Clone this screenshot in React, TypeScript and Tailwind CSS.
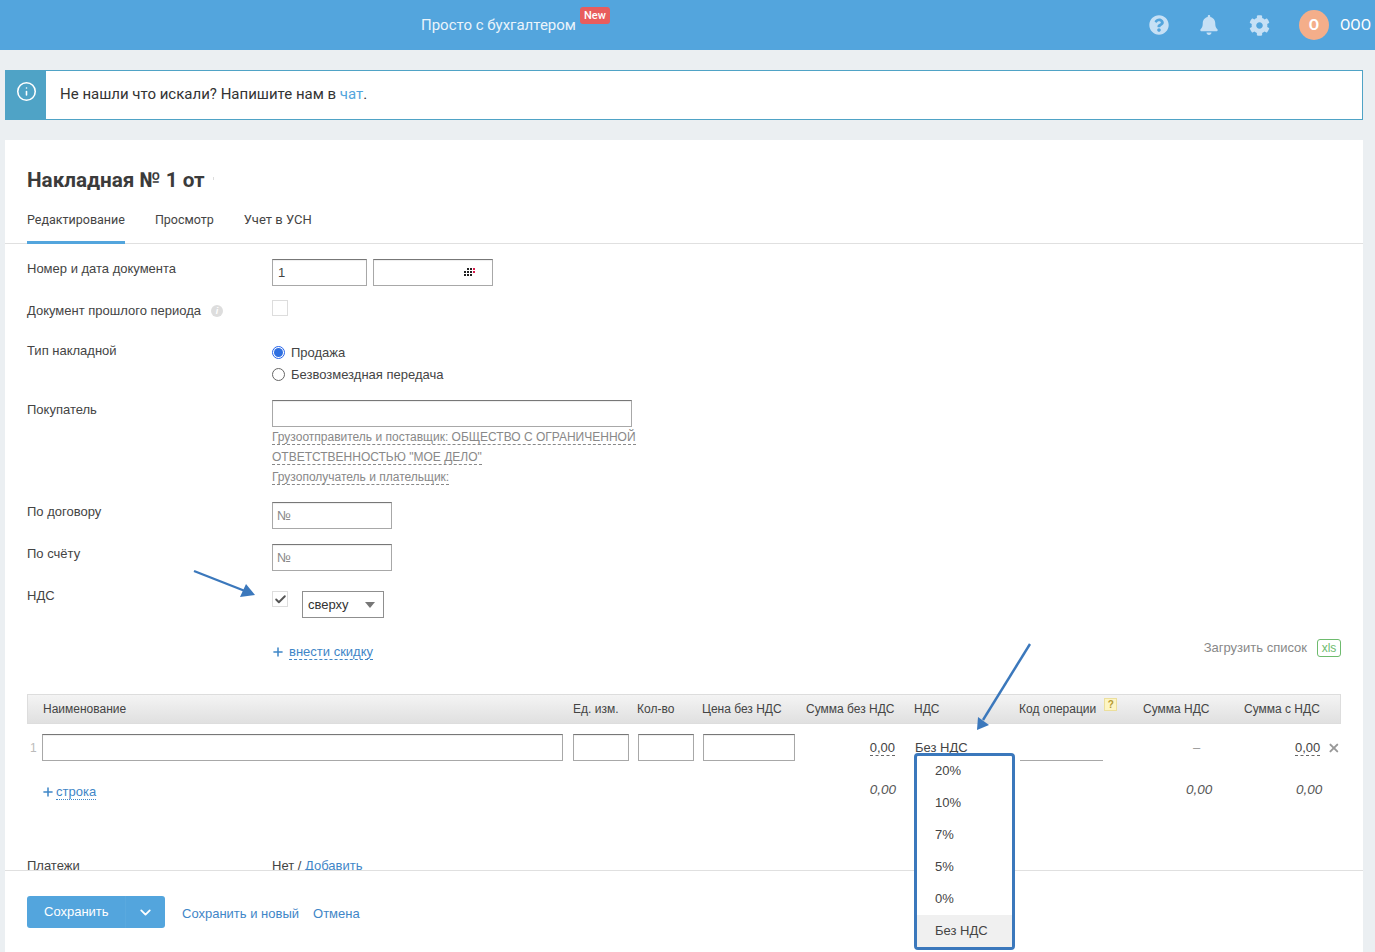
import React from 'react';
import { Check, ChevronDown, Info, Plus, X } from 'lucide-react';
import { FaBell, FaCog, FaQuestionCircle } from 'react-icons/fa';

const inputCls = 'h-[27px] border border-[#a8a8a8] border-t-[#777777] bg-white shadow-[inset_0_1px_1px_#eeeeee]';
const dashed = 'border-b border-dashed border-[#666666]';

const columns = 'grid grid-cols-[546px_64px_65px_104px_108px_105px_124px_101px_97px]';
// the header has a 1px border, so its first column is one pixel shorter
const headerColumns = 'grid grid-cols-[545px_64px_65px_104px_108px_105px_124px_101px_96px]';

const vatOptions = ['20%', '10%', '7%', '5%', '0%'];

const FormRow: React.FC<{ label: React.ReactNode; labelTop?: string; className?: string; children?: React.ReactNode }> = ({
  label,
  labelTop = 'pt-0',
  className = '',
  children,
}) => (
  <div className={`flex items-start ${className}`}>
    <div className={`w-[245px] shrink-0 text-[13px] leading-[18px] text-[#444444] ${labelTop}`}>{label}</div>
    <div className="flex-1">{children}</div>
  </div>
);

// [column, row] of each dot of the small calendar mark
const calendarDots = [
  [1, 0], [2, 0], [3, 0],
  [0, 1], [1, 1], [2, 1], [3, 1],
  [0, 2], [1, 2], [2, 2],
];

const CalendarDots = () => (
  <svg width="11" height="9" viewBox="0 0 11 9" className="block">
    {calendarDots.map(([c, r]) => (
      <rect key={`${c}-${r}`} x={c * 3} y={r * 3} width="2" height="2" fill={c === 3 ? '#d81b4a' : '#222222'} />
    ))}
  </svg>
);

const App: React.FC = () => {
  return (
    <div className="relative flex h-[952px] w-[1375px] flex-col overflow-hidden bg-[#ebeff2] font-['Roboto',sans-serif] text-[#444444]">
      {/* top bar */}
      <header className="flex h-[50px] shrink-0 items-center bg-[#53a5dd] pr-[5px] text-white">
        <div className="ml-[421px] flex items-start">
          <span className="text-[15px] leading-[20px] text-[#eaf4fb]">Просто с бухгалтером</span>
          <span className="ml-[4px] -mt-[8px] rounded-[3px] bg-[#e85d5d] px-[4px] text-[11px] font-medium leading-[17px] text-white">New</span>
        </div>
        <div className="ml-auto flex items-center">
          <FaQuestionCircle className="text-[20px] text-[#c6e0f5]" />
          <FaBell className="ml-[30px] text-[20px] text-[#c6e0f5]" />
          <FaCog className="ml-[30px] text-[21px] text-[#c6e0f5]" />
          <div className="ml-[29px] flex h-[30px] w-[30px] items-center justify-center rounded-full bg-[#f4ae8a] text-[15px] font-bold">О</div>
          <span className="ml-[11px] w-[30px] text-[15px]">ООО</span>
        </div>
      </header>

      {/* info message */}
      <div className="mx-[5px] mr-[12px] mt-[20px] flex h-[50px] shrink-0 border border-[#4fa3c6] bg-white">
        <div className="flex w-[40px] justify-center bg-[#4fa3c6] pt-[10px]">
          <Info size={21} strokeWidth={1.8} className="text-white" />
        </div>
        <div className="ml-[14px] pt-[14px] text-[15px] leading-[18px] text-[#333333]">
          Не нашли что искали? Напишите нам в <span className="text-[#53a5dd]">чат</span>.
        </div>
      </div>

      {/* card */}
      <main className="mx-[5px] mr-[12px] mt-[20px] flex min-h-0 flex-1 flex-col bg-white">
        <h1 className="ml-[22px] mt-[27px] flex items-center text-[20.7px] font-bold leading-[26px] text-[#3b3b3b]">
          Накладная № 1 от
          <span className="ml-[8px] -mt-[3px] h-[3px] w-[1px] bg-[#dddddd]" />
        </h1>
        <nav className="mt-[11px] flex h-[40px] shrink-0 border-b border-[#e0e0e0] pl-[22px] text-[12.5px] text-[#444444]">
          <span className="h-[40px] border-b-[3px] border-[#53a5dd] pt-[7px] leading-[18px]">Редактирование</span>
          <span className="ml-[30px] pt-[7px] leading-[18px]">Просмотр</span>
          <span className="ml-[30px] pt-[7px] text-[13px] leading-[18px]">Учет в УСН</span>
        </nav>

        <section className="h-[626px] shrink-0 overflow-hidden px-[22px] pt-[15px] font-['Liberation_Sans',Arial,sans-serif]">
          <FormRow label="Номер и дата документа" labelTop="pt-[1px]">
            <div className="flex gap-[6px]">
              <div className={`${inputCls} w-[95px] pl-[5px] text-[13px] leading-[25px]`}>1</div>
              <div className={`${inputCls} flex w-[120px] items-center justify-end pr-[17px]`}>
                <CalendarDots />
              </div>
            </div>
          </FormRow>

          <FormRow
            className="mt-[14px]"
            labelTop="pt-[2px]"
            label={
              <span className="flex items-center">
                Документ прошлого периода
                <span className="ml-[10px] flex h-[12px] w-[12px] items-center justify-center rounded-full bg-[#dddddd] text-[9px] font-bold italic text-white">i</span>
              </span>
            }
          >
            <div className="h-[16px] w-[16px] border border-[#dddddd] bg-white" />
          </FormRow>

          <FormRow className="mt-[22px]" label="Тип накладной">
            <div className="flex flex-col text-[13px] leading-[18px] text-[#444444]">
              <div className="mt-[2px] flex items-center">
                <span className="mb-[2px] flex h-[13px] w-[13px] items-center justify-center rounded-full border border-[#2563eb]">
                  <span className="h-[9px] w-[9px] rounded-full bg-[#2f6fe0]" />
                </span>
                <span className="ml-[6px]">Продажа</span>
              </div>
              <div className="mt-[4px] flex items-center">
                <span className="mb-[2px] h-[13px] w-[13px] rounded-full border border-[#666666]" />
                <span className="ml-[6px]">Безвозмездная передача</span>
              </div>
            </div>
          </FormRow>

          <FormRow className="mt-[16px]" labelTop="pt-[1px]" label="Покупатель">
            <div className={`${inputCls} w-[360px]`} />
            <div className="whitespace-nowrap text-[12px] leading-[20px] text-[#888888]">
              <div className="h-[20px]">
                <span className="border-b border-dashed border-[#888888]">Грузоотправитель и поставщик: ОБЩЕСТВО С ОГРАНИЧЕННОЙ</span>
              </div>
              <div className="h-[20px]">
                <span className="border-b border-dashed border-[#888888]">ОТВЕТСТВЕННОСТЬЮ "МОЕ ДЕЛО"</span>
              </div>
              <div className="h-[20px]">
                <span className="border-b border-dashed border-[#888888]">Грузополучатель и плательщик:</span>
              </div>
            </div>
          </FormRow>

          <FormRow className="mt-[15px]" labelTop="pt-[1px]" label="По договору">
            <div className={`${inputCls} w-[120px] pl-[4px] text-[13px] leading-[25px] text-[#888888]`}>№</div>
          </FormRow>

          <FormRow className="mt-[15px]" labelTop="pt-[1px]" label="По счёту">
            <div className={`${inputCls} w-[120px] pl-[4px] text-[13px] leading-[25px] text-[#888888]`}>№</div>
          </FormRow>

          <FormRow className="mt-[17px]" labelTop="-mt-[1px]" label="НДС">
            <div className="flex items-start">
              <div className="mt-[3px] flex h-[16px] w-[16px] items-center justify-center border border-[#dddddd] bg-white">
                <Check size={13} strokeWidth={3.5} className="text-[#555555]" />
              </div>
              <div className="ml-[14px] mt-[3px] flex h-[27px] w-[82px] items-center justify-between border border-[#8f8f8f] pl-[5px] pr-[8px] text-[13px] text-[#333333]">
                сверху
                <span className="h-0 w-0 border-x-[5px] border-t-[6px] border-x-transparent border-t-[#777777]" />
              </div>
            </div>
          </FormRow>

          <div className="mt-[20px] flex h-[36px] items-start justify-between">
            <div className="ml-[245px] mt-[6px] flex items-center text-[13px] text-[#3f86c7]">
              <Plus size={14} strokeWidth={2.6} className="-ml-[1px] text-[#3f86c7]" />
              <span className="ml-[4px] border-b border-dashed border-[#3f86c7] leading-[15px]">внести скидку</span>
            </div>
            <div className="flex items-center text-[13px] text-[#888888]">
              Загрузить список
              <span className="ml-[10px] flex h-[18px] w-[24px] items-center justify-center rounded-[3px] border border-[#6ebb6e] text-[12px] text-[#6ebb6e]">xls</span>
            </div>
          </div>

          {/* table */}
          <div className={`${headerColumns} mt-[20px] h-[30px] items-center border border-[#dddddd] bg-gradient-to-b from-[#f4f4f4] to-[#e0e0e0] text-[12px] text-[#444444]`}>
            <span className="pl-[15px]">Наименование</span>
            <span>Ед. изм.</span>
            <span>Кол-во</span>
            <span>Цена без НДС</span>
            <span>Сумма без НДС</span>
            <span>НДС</span>
            <span className="flex items-start">
              Код операции
              <span className="ml-[8px] -mt-[2px] flex h-[13px] w-[13px] items-center justify-center border border-[#ecdf9c] bg-[#fdf5c4] text-[10px] font-bold leading-none text-[#b59a33]">?</span>
            </span>
            <span>Сумма НДС</span>
            <span>Сумма с НДС</span>
          </div>

          <div className={`${columns} mt-[10px] h-[27px] items-center text-[13px]`}>
            <div className="flex items-center">
              <span className="w-[15px] pl-[3px] text-[12px] text-[#bbbbbb]">1</span>
              <div className={`${inputCls} w-[521px]`} />
            </div>
            <div className={`${inputCls} w-[56px]`} />
            <div className={`${inputCls} ml-[1px] w-[56px]`} />
            <div className={`${inputCls} ml-[1px] w-[92px]`} />
            <div className="flex justify-end pr-[19px]">
              <span className={`${dashed} leading-[15px] text-[#444444]`}>0,00</span>
            </div>
            <div className="pl-[1px]">Без НДС</div>
            <div className="ml-[1px] w-[83px] self-end border-b border-[#a8a8a8]" />
            <div className="pl-[50px] text-[#999999]">–</div>
            <div className="flex items-center pl-[51px]">
              <span className={`${dashed} leading-[15px]`}>0,00</span>
              <X size={14} strokeWidth={3.4} className="ml-[7px] text-[#999999]" />
            </div>
          </div>

          <div className={`${columns} mt-[18px] h-[22px] items-center text-[13.5px] italic text-[#555555]`}>
            <div className="pl-[14px] not-italic">
              <span className="mt-[3px] flex items-center text-[13px] text-[#3f86c7]">
                <Plus size={14} strokeWidth={2.6} />
                <span className="ml-[1px] border-b border-dotted border-[#3f86c7] leading-[15px]">строка</span>
              </span>
            </div>
            <span />
            <span />
            <span />
            <span className="pr-[18px] text-right">0,00</span>
            <span />
            <span />
            <span className="pl-[43px]">0,00</span>
            <span className="pl-[52px]">0,00</span>
          </div>

          <FormRow className="mt-[56px]" label="Платежи">
            <span className="block text-[13px] leading-[18px] text-[#444444]">
              Нет / <span className="text-[#3f86c7]">Добавить</span>
            </span>
          </FormRow>
        </section>

        {/* footer */}
        <footer className="flex flex-1 items-start border-t border-[#e0e0e0] pl-[22px] pt-[25px] font-['Liberation_Sans',Arial,sans-serif]">
          <div className="flex h-[32px] w-[138px] items-center rounded-[3px] bg-[#53a5dd] text-[13px] text-white">
            <span className="flex-1 pl-[17px]">Сохранить</span>
            <span className="flex h-full w-[40px] items-center justify-center border-l border-[#5aa9de]">
              <ChevronDown size={17} strokeWidth={2.6} />
            </span>
          </div>
          <span className="ml-[17px] mt-[9px] text-[13px] leading-[18px] text-[#3f86c7]">Сохранить и новый</span>
          <span className="ml-[14px] mt-[9px] text-[13px] leading-[18px] text-[#3f86c7]">Отмена</span>
        </footer>
      </main>

      {/* VAT dropdown, opened over the table */}
      <div className="absolute left-[914px] top-[753px] h-[197px] w-[101px] overflow-hidden rounded-[4px] border-[3px] border-[#3b78bc] bg-white font-['Liberation_Sans',Arial,sans-serif] text-[13px] text-[#444444]">
        <div className="-mt-[1px]">
          {vatOptions.map(option => (
            <div key={option} className="flex h-[32px] items-center pb-[1px] pl-[18px]">{option}</div>
          ))}
          <div className="flex h-[33px] items-center bg-[#f0f0f0] pb-[2px] pl-[18px]">Без НДС</div>
        </div>
      </div>

      {/* annotation arrows */}
      <svg className="pointer-events-none absolute left-0 top-0" width="1375" height="952">
        <line x1="194" y1="571" x2="245" y2="591" stroke="#3b78bc" strokeWidth="2.4" />
        <polygon points="255,595 240,597 246,584" fill="#3b78bc" />
        <line x1="1030" y1="644" x2="983" y2="720" stroke="#3b78bc" strokeWidth="2.4" />
        <polygon points="977,730 978,717 989,725" fill="#3b78bc" />
      </svg>
    </div>
  );
};

export default App;
